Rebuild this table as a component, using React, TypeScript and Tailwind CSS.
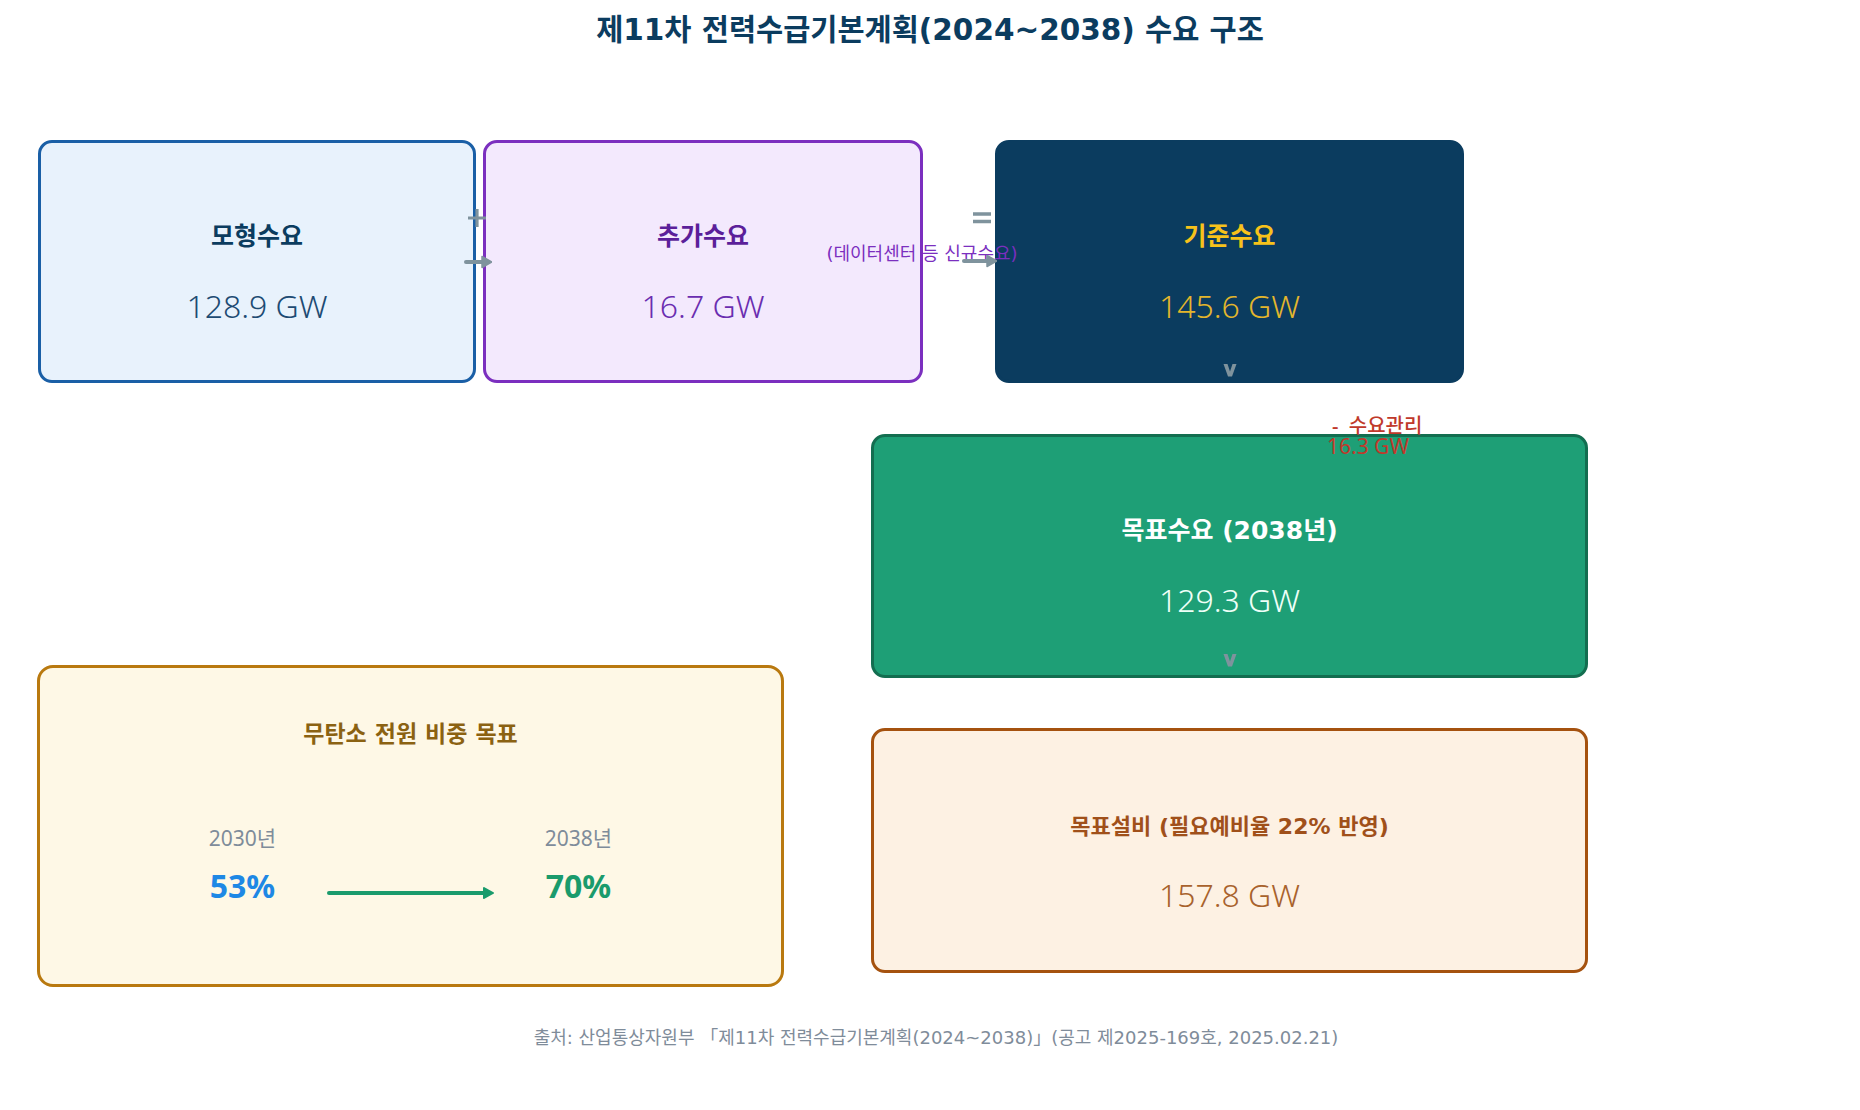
// 제11차 전력수급기본계획 수요 구조 — 다이어그램 한 장.
// 노드는 자유 캔버스 위 위치 자체가 내용이라 absolute 로 놓는다.
import type { ReactNode } from "react";

const GRAY = "#7f939d";

interface NodeProps {
  className: string;
  label: string;
  value: string;
  labelClass: string;
  valueClass: string;
  children?: ReactNode;
}

function Node({ className, label, value, labelClass, valueClass, children }: NodeProps) {
  return (
    <div className={`absolute flex flex-col items-center justify-center rounded-[14px] border-[3px] ${className}`}>
      <div className={`font-bold whitespace-nowrap font-['DejaVu_Sans','Noto_Sans_CJK_KR',sans-serif] ${labelClass}`}>
        {label}
      </div>
      <div className={`font-light text-[32px] leading-[40px] ${valueClass}`}>{value}</div>
      {children}
    </div>
  );
}

function Plus({ className }: { className: string }) {
  return (
    <svg className={`absolute ${className}`} width="18" height="18" viewBox="0 0 18 18">
      <path d="M9 0V18M0 9H18" stroke={GRAY} strokeWidth="3.2" />
    </svg>
  );
}

function Equals({ className }: { className: string }) {
  return (
    <svg className={`absolute ${className}`} width="18" height="12" viewBox="0 0 18 12">
      <path d="M0 2H18M0 9.5H18" stroke={GRAY} strokeWidth="3.5" />
    </svg>
  );
}

function Arrow({ className, width }: { className: string; width: number }) {
  return (
    <svg className={`absolute ${className}`} width={width} height="14" viewBox={`0 0 ${width} 14`}>
      <path d={`M2 7H${width - 6}`} stroke={GRAY} strokeWidth="4" strokeLinecap="round" />
      <path d={`M${width - 10} 1.5L${width} 7L${width - 10} 12.5Z`} fill={GRAY} stroke={GRAY} strokeWidth="1.5" strokeLinejoin="round" />
    </svg>
  );
}

function Chevron({ className }: { className: string }) {
  return (
    <svg className={`absolute ${className}`} width="14" height="14" viewBox="0 0 14 14">
      <path d="M0.5 1H4.5L7 8.5L9.5 1H13.5L9 13.5H5Z" fill={GRAY} />
    </svg>
  );
}

export default function App() {
  return (
    <div className="w-[1860px] h-[1110px] bg-white flex flex-col font-['Noto_Sans','Noto_Sans_CJK_KR',sans-serif]">
      <h1 className="pt-[10px] text-center text-[29.5px] leading-[40px] font-bold text-[#0b3c5f] font-['DejaVu_Sans','Noto_Sans_CJK_KR',sans-serif]">
        제11차 전력수급기본계획(2024~2038) 수요 구조
      </h1>

      <div className="relative h-[977px]">
        <Node
          className="left-[38px] top-[90px] w-[438px] h-[243px] pt-[23px] gap-[33px] bg-[#e8f2fc] border-[#1a5fa6]"
          label="모형수요"
          value="128.9 GW"
          labelClass="text-[25px] leading-[32px] text-[#0b3c5f]"
          valueClass="text-[#1d4b73]"
        />
        <Node
          className="left-[483px] top-[90px] w-[440px] h-[243px] pt-[23px] gap-[33px] bg-[#f3e9fd] border-[#7b2fbf]"
          label="추가수요"
          value="16.7 GW"
          labelClass="text-[25px] leading-[32px] text-[#5b1f9a]"
          valueClass="text-[#6a2db0]"
        />
        <Node
          className="left-[995px] top-[90px] w-[469px] h-[243px] pt-[23px] gap-[33px] bg-[#0b3c5f] border-[#0b3c5f]"
          label="기준수요"
          value="145.6 GW"
          labelClass="text-[25px] leading-[32px] text-[#f7c21a]"
          valueClass="text-[#e3b62c]"
        />
        <Node
          className="left-[871px] top-[384px] w-[717px] h-[244px] pt-[23px] gap-[33px] bg-[#1e9f76] border-[#136e50]"
          label="목표수요 (2038년)"
          value="129.3 GW"
          labelClass="text-[25px] leading-[32px] text-white"
          valueClass="text-[#effff8]"
        />
        <Node
          className="left-[871px] top-[678px] w-[717px] h-[245px] pt-[25px] gap-[33px] bg-[#fdf1e3] border-[#a5520f]"
          label="목표설비 (필요예비율 22% 반영)"
          value="157.8 GW"
          labelClass="text-[22px] leading-[30px] text-[#a0501a]"
          valueClass="text-[#a8622c]"
        />

        <div className="absolute left-[922px] top-[193px] -translate-x-1/2 text-[18px] leading-[22px] whitespace-nowrap text-[#7b2fbf] font-['DejaVu_Sans','Noto_Sans_CJK_KR',sans-serif]">
          (데이터센터 등 신규수요)
        </div>

        <Plus className="left-[468px] top-[159px]" />
        <Arrow className="left-[464px] top-[205px]" width={28} />
        <Equals className="left-[973px] top-[162px]" />
        <Arrow className="left-[962px] top-[204px]" width={35} />
        <Chevron className="left-[1223px] top-[313px]" />
        <Chevron className="left-[1223px] top-[603px]" />

        <div className="absolute left-[1327px] top-[365px] text-[20px] leading-[21px] whitespace-pre text-[#c0392b]">
          <div className="pl-[5px] font-medium">-  수요관리</div>
          <div className="text-[21px]">16.3 GW</div>
        </div>

        <div className="absolute left-[37px] top-[615px] w-[747px] h-[322px] rounded-[16px] border-[3px] border-[#b9790f] bg-[#fef8e6] flex flex-col items-center pt-[51px]">
          <div className="text-[23px] leading-[30px] font-bold text-[#8b6212] font-['DejaVu_Sans','Noto_Sans_CJK_KR',sans-serif]">
            무탄소 전원 비중 목표
          </div>
          <div className="mt-[76px] flex items-start justify-center gap-[44px]">
            <div className="w-[80px] flex flex-col items-center">
              <div className="text-[21px] leading-[26px] text-[#7f8c9a]">2030년</div>
              <div className="mt-[15px] text-[32px] leading-[40px] font-bold text-[#1e88e5]">53%</div>
            </div>
            <div className="w-[168px] h-[40px] mt-[45px] flex items-center pt-[6px]">
              <svg width="168" height="14" viewBox="0 0 168 14">
                <path d="M2 7H160" stroke="#1a9b6c" strokeWidth="4" strokeLinecap="round" />
                <path d="M157 2L166 7L157 12Z" fill="#1a9b6c" stroke="#1a9b6c" strokeWidth="2" strokeLinejoin="round" />
              </svg>
            </div>
            <div className="w-[80px] flex flex-col items-center">
              <div className="text-[21px] leading-[26px] text-[#7f8c9a]">2038년</div>
              <div className="mt-[15px] text-[32px] leading-[40px] font-bold text-[#1a9b6c]">70%</div>
            </div>
          </div>
        </div>
      </div>

      <p className="pl-[12px] text-center text-[18px] leading-[22px] text-[#7f8c9a] font-['DejaVu_Sans','Noto_Sans_CJK_KR',sans-serif]">
        출처: 산업통상자원부 「제11차 전력수급기본계획(2024~2038)」(공고 제2025-169호, 2025.02.21)
      </p>
    </div>
  );
}
